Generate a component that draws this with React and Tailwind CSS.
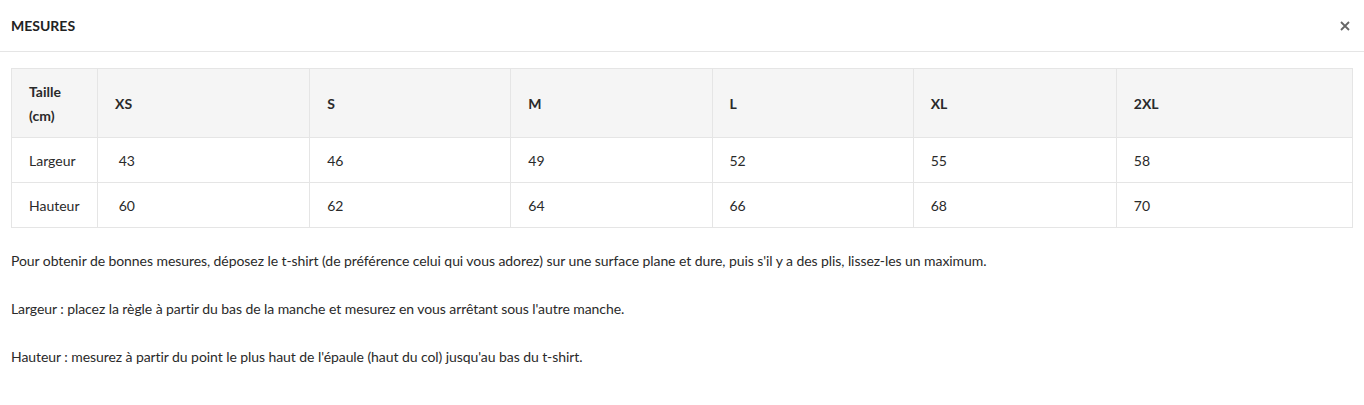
export default function App() {
  const sizes = ["XS", "S", "M", "L", "XL", "2XL"];
  const widths = ["w-[212px]", "w-[201px]", "w-[201px]", "w-[201px]", "w-[203px]", "w-[236px]"];
  const rows = [
    { label: "Largeur", values: ["\u00a043", "46", "49", "52", "55", "58"] },
    { label: "Hauteur", values: ["\u00a060", "62", "64", "66", "68", "70"] },
  ];

  return (
    <div className="min-h-screen bg-white text-[14px] text-[#2a2a2a] font-['Lato',sans-serif]">
      <div className="flex h-[52px] items-center justify-between border-b border-[#e5e5e5] pl-[11px] pr-[14px]">
        <h2 className="font-bold text-[14px] text-[#222]">MESURES</h2>
        <button className="text-[#666]">
          <svg width="10" height="10" viewBox="0 0 10 10" fill="none" stroke="currentColor" strokeWidth="1.8">
            <path d="M1 1l8 8M9 1l-8 8" />
          </svg>
        </button>
      </div>
      <div className="px-[11px] pt-4">
        <table className="w-full border-collapse border border-[#e5e5e5] leading-6 mb-[21px]">
          <thead>
            <tr className="bg-[#f5f5f5]">
              <th className="w-[86px] border border-[#e5e5e5] px-[17px] pt-[11px] pb-[9px] text-left font-bold">
                Taille
                <br />
                (cm)
              </th>
              {sizes.map((s, i) => (
                <th
                  key={s}
                  className={`${widths[i]} border border-[#e5e5e5] px-[17px] pt-[11px] pb-[9px] text-left font-bold`}
                >
                  {s}
                </th>
              ))}
            </tr>
          </thead>
          <tbody>
            {rows.map((r) => (
              <tr key={r.label}>
                <td className="border border-[#e5e5e5] px-[17px] pt-[11px] pb-[9px]">{r.label}</td>
                {r.values.map((v, i) => (
                  <td key={i} className="border border-[#e5e5e5] px-[17px] pt-[11px] pb-[9px]">
                    {v}
                  </td>
                ))}
              </tr>
            ))}
          </tbody>
        </table>
        <div className="leading-6 tracking-[-0.07px]">
          <p className="mb-6">
            Pour obtenir de bonnes mesures, déposez le t-shirt (de préférence celui qui vous adorez) sur une surface plane et dure, puis s'il y a des plis, lissez-les un maximum.
          </p>
          <p className="mb-6">
            Largeur : placez la règle à partir du bas de la manche et mesurez en vous arrêtant sous l'autre manche.
          </p>
          <p>Hauteur : mesurez à partir du point le plus haut de l'épaule (haut du col) jusqu'au bas du t-shirt.</p>
        </div>
      </div>
    </div>
  );
}
